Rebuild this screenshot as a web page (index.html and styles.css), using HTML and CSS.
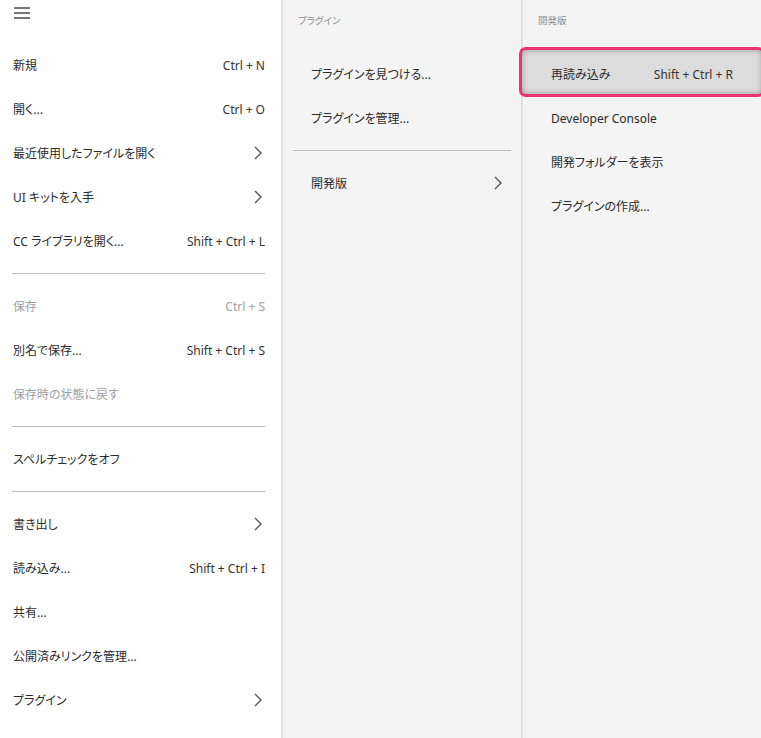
FILE: index.html
```html
<!DOCTYPE html>
<html lang="ja">
<head>
    <meta charset="UTF-8">
    <title>メニュー</title>
    <link rel="stylesheet" href="styles.css">
</head>
<body>
    <div class="menus">
        <div class="panel main">
            <div class="burger">
                <svg width="16" height="12" viewBox="0 0 16 12"><path d="M0 1h16M0 6h16M0 11h16" stroke="#4a4a4a" stroke-width="1.6"/></svg>
            </div>
            <div class="item"><span>新規</span><span class="key">Ctrl + N</span></div>
            <div class="item"><span>開く...</span><span class="key">Ctrl + O</span></div>
            <div class="item"><span>最近使用したファイルを開く</span><svg class="chev" width="8" height="14" viewBox="0 0 8 14"><path d="M1 1l6 6-6 6" fill="none" stroke="#555" stroke-width="1.4"/></svg></div>
            <div class="item"><span>UI キットを入手</span><svg class="chev" width="8" height="14" viewBox="0 0 8 14"><path d="M1 1l6 6-6 6" fill="none" stroke="#555" stroke-width="1.4"/></svg></div>
            <div class="item"><span>CC ライブラリを開く...</span><span class="key">Shift + Ctrl + L</span></div>
            <div class="sep"></div>
            <div class="item off"><span>保存</span><span class="key">Ctrl + S</span></div>
            <div class="item"><span>別名で保存...</span><span class="key">Shift + Ctrl + S</span></div>
            <div class="item off"><span>保存時の状態に戻す</span></div>
            <div class="sep"></div>
            <div class="item"><span>スペルチェックをオフ</span></div>
            <div class="sep"></div>
            <div class="item"><span>書き出し</span><svg class="chev" width="8" height="14" viewBox="0 0 8 14"><path d="M1 1l6 6-6 6" fill="none" stroke="#555" stroke-width="1.4"/></svg></div>
            <div class="item"><span>読み込み...</span><span class="key">Shift + Ctrl + I</span></div>
            <div class="item"><span>共有...</span></div>
            <div class="item"><span>公開済みリンクを管理...</span></div>
            <div class="item"><span>プラグイン</span><svg class="chev" width="8" height="14" viewBox="0 0 8 14"><path d="M1 1l6 6-6 6" fill="none" stroke="#555" stroke-width="1.4"/></svg></div>
        </div>
        <div class="panel sub">
            <div class="title">プラグイン</div>
            <div class="item"><span>プラグインを見つける...</span></div>
            <div class="item"><span>プラグインを管理...</span></div>
            <div class="sep"></div>
            <div class="item"><span>開発版</span><svg class="chev" width="8" height="14" viewBox="0 0 8 14"><path d="M1 1l6 6-6 6" fill="none" stroke="#555" stroke-width="1.4"/></svg></div>
        </div>
        <div class="panel sub">
            <div class="title">開発版</div>
            <div class="item active"><span>再読み込み</span><span class="key">Shift + Ctrl + R</span></div>
            <div class="item"><span>Developer Console</span></div>
            <div class="item"><span>開発フォルダーを表示</span></div>
            <div class="item"><span>プラグインの作成...</span></div>
        </div>
    </div>
</body>
</html>
```

FILE: styles.css
```css
body {
    margin: 0;
    font-family: "Noto Sans", "Noto Sans CJK JP", sans-serif;
    font-size: 12px;
    font-feature-settings: "palt";
    color: #2b2b2b;
    background: #f4f4f4;
}
.menus {
    display: flex;
    height: 738px;
    overflow: hidden;
}
.panel {
    flex: none;
}
.main {
    width: 281px;
    background: #fff;
    padding: 0 16px 0 13px;
    box-sizing: border-box;
}
.sub {
    width: 240px;
    border-left: 2px solid #e1e1e1;
    background: #f4f4f4;
    padding: 0 16px 0 28px;
    box-sizing: border-box;
}
.sub:last-child {
    padding-right: 28px;
}
.burger {
    height: 43px;
    padding: 7px 0 0 1px;
    box-sizing: border-box;
}
.burger svg {
    display: block;
}
.title {
    height: 52px;
    padding: 13px 0 0;
    margin-left: -13px;
    box-sizing: border-box;
    font-size: 9.5px;
    color: #8f8f8f;
}
.item {
    position: relative;
    height: 44px;
    display: flex;
    align-items: center;
    justify-content: space-between;
    white-space: nowrap;
}
.item span {
    position: relative;
}
.key {
    color: #333;
}
.off,
.off .key {
    color: #a0a0a0;
}
.chev {
    display: block;
    margin-right: 3px;
}
.sep {
    height: 1px;
    background: #bdbdbd;
    margin: 10px 0 10px -1px;
}
.sub .sep {
    margin-left: -18px;
    margin-right: -6px;
}
.active::before {
    content: "";
    position: absolute;
    top: -5px;
    bottom: -1px;
    left: -32px;
    right: -32px;
    border: 3px solid #e9356c;
    border-radius: 7px;
    background: #dcdcdc;
    box-shadow: inset 0 0 6px rgba(0, 0, 0, 0.3);
}
```
